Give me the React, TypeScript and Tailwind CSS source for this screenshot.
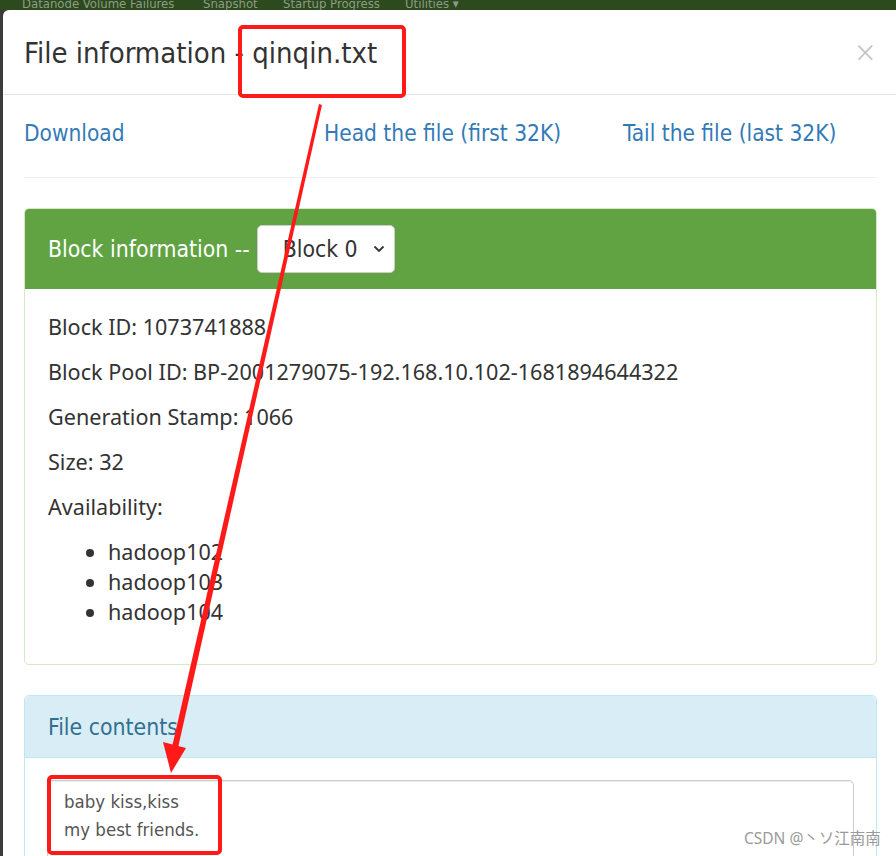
export default function App() {
  const narrow = "font-['Liberation_Sans_Narrow','DejaVu_Sans_Condensed',Roboto,sans-serif]";
  const hosts = ["hadoop102", "hadoop103", "hadoop104"];

  return (
    <div className="relative flex h-[856px] w-[896px] flex-col overflow-hidden bg-[#3b3b3b] font-['Noto_Sans',sans-serif] text-[#333]">
      {/* navbar behind the modal backdrop */}
      <div className={`${narrow} flex h-[10px] shrink-0 items-end overflow-hidden bg-[#2c4a1e] text-[13px] leading-[16px] text-[#8e9c86]`}>
        <span className="-mb-[2px] ml-[22px] w-[153px] whitespace-nowrap">Datanode Volume Failures</span>
        <span className="-mb-[2px] ml-[28px] w-[52px] whitespace-nowrap">Snapshot</span>
        <span className="-mb-[2px] ml-[28px] w-[96px] whitespace-nowrap">Startup Progress</span>
        <span className="-mb-[2px] ml-[26px] whitespace-nowrap">Utilities ▾</span>
      </div>

      <div className="flex flex-1">
        <div className="w-[3px] shrink-0" />
        <div className="w-[895px] shrink-0 rounded-tl-[6px] bg-white">
          {/* header */}
          <div className="flex h-[85px] items-center justify-between border-b border-[#e5e5e5] pl-[21px] pr-[22px]">
            <h4 className={`${narrow} mt-[3px] text-[29px] text-[#333]`}>File information - qinqin.txt</h4>
            <span className="mr-[1px] text-[34px] font-light leading-none text-[#c4c4c4]">×</span>
          </div>

          {/* body */}
          <div className="px-[21px] pt-[21px]">
            <div className={`${narrow} grid grid-cols-[300px_299px_1fr] text-[22.5px] leading-[34px] text-[#337ab7]`}>
              <a>Download</a>
              <a>Head the file (first 32K)</a>
              <a>Tail the file (last 32K)</a>
            </div>
            <hr className="mt-[27px] mb-[30px] w-[853px] border-[#eeeeee]" />

            {/* block panel */}
            <div className="w-[853px] overflow-hidden rounded-[5px] border border-[#d6e9c6]">
              <div className="flex h-[80px] items-center bg-[#61a343] px-[23px] text-[22.8px] text-white">
                <span className={narrow}>Block information --</span>
                <div className="ml-[7px] flex h-[48px] w-[138px] items-center justify-between rounded-[5px] border border-[#cccccc] bg-white pl-[25px] pr-[9px] text-[#333]">
                  <span className={narrow}>Block 0</span>
                  <svg width="12" height="8" viewBox="0 0 12 8" fill="none" stroke="#333" strokeWidth="1.8">
                    <path d="M1.5 1.5 6 6l4.5-4.5" />
                  </svg>
                </div>
              </div>
              <div className="px-[23px] pt-[23px] pb-[22px] text-[21.6px] leading-[30px]">
                <p className="mb-[15px]">Block ID: 1073741888</p>
                <p className="mb-[15px]">Block Pool ID: BP-2001279075-192.168.10.102-1681894644322</p>
                <p className="mb-[15px]">Generation Stamp: 1066</p>
                <p className="mb-[15px]">Size: 32</p>
                <p className="mb-[15px]">Availability:</p>
                <ul className="mb-[15px] list-disc pl-[60px]">
                  {hosts.map((h) => (
                    <li key={h}>{h}</li>
                  ))}
                </ul>
              </div>
            </div>

            {/* contents panel */}
            <div className="mt-[30px] w-[853px] rounded-[5px] border border-[#bce8f1]">
              <div className={`${narrow} flex h-[62px] items-center rounded-t-[5px] border-b border-[#bce8f1] bg-[#d9edf7] px-[23px] pt-[2px] text-[22.8px] text-[#31708f]`}>
                File contents
              </div>
              <div className="px-[22px] pt-[22px]">
                <div className={`${narrow} h-[120px] w-[807px] rounded-[5px] border border-[#cccccc] px-[16px] py-[7px] text-[18.5px] leading-[28px] text-[#555] shadow-[inset_0_1px_1px_rgba(0,0,0,0.075)]`}>
                  <div>baby kiss,kiss</div>
                  <div>my best friends.</div>
                </div>
              </div>
            </div>
          </div>
        </div>
      </div>

      {/* watermark */}
      <div className="absolute left-[744px] top-[826px] font-['Noto_Sans','Noto_Sans_CJK_SC',sans-serif] text-[15.5px] leading-[24px] text-[#9a9a9a]">
        CSDN @丶ソ江南南
      </div>

      {/* red annotations drawn over the screenshot */}
      <svg className="pointer-events-none absolute left-0 top-0" width="896" height="856" viewBox="0 0 896 856" fill="none">
        <rect x="240" y="27" width="164" height="69" rx="3" stroke="#ff1a1a" strokeWidth="4" />
        <polygon points="319,104 322,105 178,748 172,747" fill="#ff1a1a" />
        <polygon points="163,742 186,748 171,773" fill="#ff1a1a" />
        <rect x="49" y="777" width="171" height="76" rx="3" stroke="#ff1a1a" strokeWidth="4" />
      </svg>
    </div>
  );
}
